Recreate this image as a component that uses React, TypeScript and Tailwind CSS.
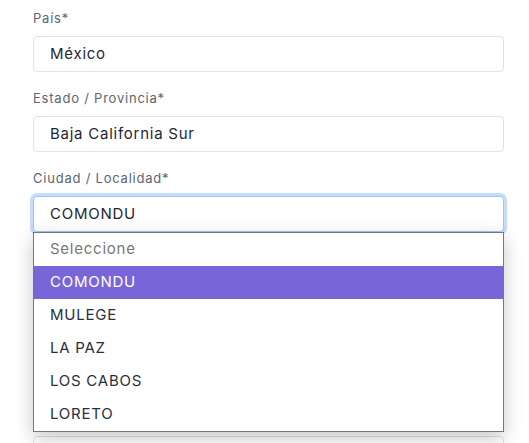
const font = { fontFamily: 'Inter, "Noto Sans", sans-serif' }

function Field({ label, value, focused }: { label: string; value: string; focused?: boolean }) {
  return (
    <div className="mb-4">
      <label className="block h-5 mb-2 text-[13px] leading-5 tracking-[0.06em] text-[#5d6573]">{label}</label>
      <div
        className={
          focused
            ? 'h-9 flex items-center px-4 rounded-[4px] border border-[#9ec5fb] bg-white text-[15px] tracking-[0.05em] text-[#1f2633] ring-[3px] ring-[#c5dcfc]'
            : 'h-9 flex items-center px-4 rounded-[4px] border border-[#dce3ec] bg-white text-[15px] tracking-[0.05em] text-[#1f2633]'
        }
      >
        {value}
      </div>
    </div>
  )
}

const options = ['COMONDU', 'MULEGE', 'LA PAZ', 'LOS CABOS', 'LORETO']

export default function App() {
  return (
    <main className="h-screen overflow-hidden bg-white pl-[33px] pr-[25px] pt-2" style={font}>
      <Field label="País*" value="México" />
      <Field label="Estado / Provincia*" value="Baja California Sur" />
      <div className="relative">
        <Field label="Ciudad / Localidad*" value="COMONDU" focused />
        <div className="absolute left-0 right-0 top-[64px] z-10 bg-white border border-[#767676] shadow-[0_6px_18px_rgba(0,0,0,0.22)]">
          <div className="h-[33px] flex items-center px-4 text-[15px] tracking-[0.05em] text-[#777777]">Seleccione</div>
          {options.map((o, i) => (
            <div
              key={o}
              className={
                i === 0
                  ? 'h-[33px] flex items-center px-4 text-[15px] tracking-[0.05em] bg-[#7866d8] text-white'
                  : 'h-[33px] flex items-center px-4 text-[15px] tracking-[0.05em] text-[#283040]'
              }
            >
              {o}
            </div>
          ))}
        </div>
        <Field label="" value="" />
        <Field label="" value="" />
        <Field label="" value="" />
      </div>
    </main>
  )
}
